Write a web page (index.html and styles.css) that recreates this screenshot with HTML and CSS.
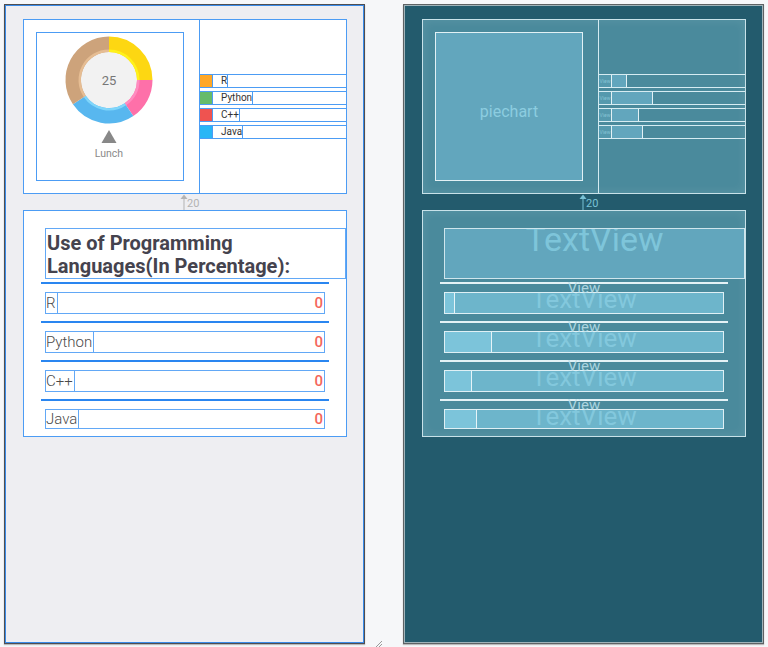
FILE: index.html
```html
<!DOCTYPE html>
<html>
<head>
<meta charset="utf-8">
<link rel="stylesheet" href="styles.css">
</head>
<body>
<div class="canvas">
  <!-- Design view -->
  <div class="frame design">
    <div class="card card-top">
      <div class="pie-col">
        <div class="pie-box">
          <svg class="pie" width="146" height="147" viewBox="0 0 146 147">
            <circle cx="72" cy="47" r="28.5" fill="#f2f2f2"/>
            <g fill="none" stroke-width="15.5">
              <path d="M72 11.25 A35.75 35.75 0 0 1 107.75 47" stroke="#fdd712"/>
              <path d="M107.75 47 A35.75 35.75 0 0 1 91.99 76.64" stroke="#fe70a9"/>
              <path d="M91.99 76.64 A35.75 35.75 0 0 1 42.36 66.99" stroke="#58b7ef"/>
              <path d="M42.36 66.99 A35.75 35.75 0 0 1 72 11.25" stroke="#cda37b"/>
            </g>
            <g fill="none" stroke-width="2.4">
              <path d="M72 17.7 A29.3 29.3 0 0 1 101.3 47" stroke="#fff21a"/>
              <path d="M101.3 47 A29.3 29.3 0 0 1 88.38 71.29" stroke="#ff8cc0"/>
              <path d="M88.38 71.29 A29.3 29.3 0 0 1 47.71 63.38" stroke="#7fd6fb"/>
              <path d="M47.71 63.38 A29.3 29.3 0 0 1 72 17.7" stroke="#e6bd93"/>
            </g>
            <text x="72" y="52" text-anchor="middle" class="pie-num">25</text>
            <polygon points="64.5,110 72,97 79.5,110" fill="#888888"/>
            <text x="72" y="124" text-anchor="middle" class="pie-lbl">Lunch</text>
          </svg>
        </div>
      </div>
      <div class="legend-col">
        <div class="legend-row"><span class="sw sw-r"></span><span class="lg-lbl">R</span></div>
        <div class="legend-row"><span class="sw sw-py"></span><span class="lg-lbl">Python</span></div>
        <div class="legend-row"><span class="sw sw-c"></span><span class="lg-lbl">C++</span></div>
        <div class="legend-row"><span class="sw sw-j"></span><span class="lg-lbl">Java</span></div>
      </div>
    </div>
    <div class="spacer">
      <svg class="arrow" width="8" height="16" viewBox="0 0 8 16"><line x1="4" y1="3" x2="4" y2="16" stroke="currentColor" stroke-width="1"/><polygon points="0.5,5 4,0.5 7.5,5" fill="currentColor"/></svg>
      <span class="dist">20</span>
    </div>
    <div class="card card-bottom">
      <div class="title">Use of Programming<br>Languages(In Percentage):</div>
      <div class="hline first"></div>
      <div class="row"><span class="rlbl">R</span><span class="val">0</span></div>
      <div class="hline"></div>
      <div class="row"><span class="rlbl">Python</span><span class="val">0</span></div>
      <div class="hline"></div>
      <div class="row"><span class="rlbl">C++</span><span class="val">0</span></div>
      <div class="hline"></div>
      <div class="row row-last"><span class="rlbl">Java</span><span class="val">0</span></div>
    </div>
  </div>

  <!-- Blueprint view -->
  <div class="frame blueprint">
    <div class="card card-top">
      <div class="pie-col">
        <div class="pie-box bp-pie">piechart</div>
      </div>
      <div class="legend-col">
        <div class="legend-row"><span class="sw bp-sw">View</span><span class="bp-lg w-r"></span></div>
        <div class="legend-row"><span class="sw bp-sw">View</span><span class="bp-lg w-py"></span></div>
        <div class="legend-row"><span class="sw bp-sw">View</span><span class="bp-lg w-c"></span></div>
        <div class="legend-row"><span class="sw bp-sw">View</span><span class="bp-lg w-j"></span></div>
      </div>
    </div>
    <div class="spacer">
      <svg class="arrow" width="8" height="16" viewBox="0 0 8 16"><line x1="4" y1="3" x2="4" y2="16" stroke="currentColor" stroke-width="1"/><polygon points="0.5,5 4,0.5 7.5,5" fill="currentColor"/></svg>
      <span class="dist">20</span>
    </div>
    <div class="card card-bottom">
      <div class="title bp-title"><span class="bp-tv-big">TextView</span></div>
      <div class="hline first"><span class="view-tag">View</span></div>
      <div class="row bp-row"><span class="bp-rl rw-r"></span><span class="bp-tv">TextView</span></div>
      <div class="hline"><span class="view-tag">View</span></div>
      <div class="row bp-row"><span class="bp-rl rw-py"></span><span class="bp-tv">TextView</span></div>
      <div class="hline"><span class="view-tag">View</span></div>
      <div class="row bp-row"><span class="bp-rl rw-c"></span><span class="bp-tv">TextView</span></div>
      <div class="hline"><span class="view-tag">View</span></div>
      <div class="row bp-row row-last"><span class="bp-rl rw-j"></span><span class="bp-tv">TextView</span></div>
    </div>
  </div>
</div>
<svg class="grip" width="8" height="6" viewBox="0 0 8 6"><line x1="1" y1="6" x2="7" y2="0" stroke="#9a9a9a" stroke-width="1"/><line x1="4" y1="6" x2="7" y2="3" stroke="#9a9a9a" stroke-width="1"/></svg>
</body>
</html>
```

FILE: styles.css
```css
html, body {
  margin: 0;
  padding: 0;
}
body {
  background: #f6f7f9;
  font-family: Roboto, "Liberation Sans", sans-serif;
  width: 768px;
  height: 647px;
  overflow: hidden;
  position: relative;
}
.canvas {
  display: flex;
  gap: 38px;
  padding: 4px 0 0 4px;
}
.frame {
  width: 361px;
  height: 640px;
  box-sizing: border-box;
  padding: 14px 0 0 18px;
  display: flex;
  flex-direction: column;
}
.design {
  background: #eeeef2;
  border: 1px solid #4e4e52;
  box-shadow: inset 0 0 0 1px #3a8be8, 0 1px 1px rgba(0,0,0,0.25);
}
.blueprint {
  background: #235b6d;
  border: 1px solid #5e6264;
  box-shadow: inset 0 0 0 1px #9fb3b9, 0 1px 1px rgba(0,0,0,0.25);
}

/* Cards */
.card {
  width: 324px;
  box-sizing: border-box;
  flex: none;
}
.design .card {
  background: #ffffff;
  border: 1px solid #4c9cf4;
}
.blueprint .card {
  background: #4a8a9c;
  border: 1px solid #c8e2e9;
  box-shadow: inset 0 0 8px 2px rgba(255,255,255,0.07);
}
.card-top {
  height: 175px;
  display: flex;
}
.pie-col {
  width: 176px;
  box-sizing: border-box;
  padding: 12px 0 0 12px;
  border-right: 1px solid #4c9cf4;
}
.blueprint .pie-col {
  border-right-color: #d4ebf1;
}
.pie-box {
  width: 148px;
  height: 149px;
  box-sizing: border-box;
  border: 1px solid #4c9cf4;
}
.pie {
  display: block;
}
.pie-num {
  font-family: Roboto, "Liberation Sans", sans-serif;
  font-size: 13px;
  fill: #777777;
}
.pie-lbl {
  font-family: Roboto, "Liberation Sans", sans-serif;
  font-size: 10.5px;
  fill: #8a8a8a;
}
.bp-pie {
  background: #62a6bd;
  border-color: #e2f1f5;
  display: flex;
  align-items: center;
  justify-content: center;
  padding-top: 9px;
  color: #8ccde0;
  font-size: 16px;
}

/* Legend */
.legend-col {
  flex: 1;
  padding-top: 54px;
  display: flex;
  flex-direction: column;
  gap: 3px;
}
.legend-row {
  height: 14px;
  box-sizing: border-box;
  border-top: 1px solid #4c9cf4;
  border-bottom: 1px solid #4c9cf4;
  display: flex;
}
.sw {
  width: 12px;
  height: 12px;
  flex: none;
}
.sw-r { background: #ffa726; }
.sw-py { background: #66bb6a; }
.sw-c { background: #ef5350; }
.sw-j { background: #29b6f6; }
.lg-lbl {
  border-left: 1px solid #4c9cf4;
  border-right: 1px solid #4c9cf4;
  padding: 0 0 0 8px;
  font-size: 10px;
  line-height: 12px;
  color: #333333;
}
.blueprint .legend-row {
  border-top-color: #d6ecf2;
  border-bottom-color: #d6ecf2;
}
.bp-sw {
  background: #5599ad;
  color: #86c3d4;
  font-size: 5px;
  line-height: 12px;
  text-align: center;
  overflow: hidden;
}
.bp-lg {
  background: #62a6bd;
  border-left: 1px solid #e2f1f5;
  border-right: 1px solid #e2f1f5;
  height: 12px;
}
.w-r { width: 14px; }
.w-py { width: 40px; }
.w-c { width: 26px; }
.w-j { width: 30px; }

/* Spacer with distance arrow */
.spacer {
  height: 16px;
  display: flex;
  align-items: flex-start;
  padding-left: 157px;
  color: #b3b3b3;
  flex: none;
}
.blueprint .spacer {
  color: #79c2d6;
}
.arrow {
  display: block;
}
.dist {
  font-size: 11px;
  line-height: 13px;
  margin-top: 3px;
  margin-left: -1px;
}

/* Bottom card */
.card-bottom {
  height: 227px;
  padding-top: 17px;
}
.title {
  margin-left: 21px;
  height: 51px;
  box-sizing: border-box;
  border: 1px solid #62a8f6;
  padding: 3px 0 0 1px;
  font-size: 20px;
  font-weight: 700;
  line-height: 23px;
  color: #45434e;
}
.hline {
  margin: 7px 0 0 17px;
  width: 288px;
  height: 2px;
  background: #2a86f0;
  position: relative;
}
.hline.first {
  margin-top: 3px;
}
.row {
  margin: 8px 0 0 21px;
  width: 280px;
  height: 22px;
  box-sizing: border-box;
  border: 1px solid #62a8f6;
  display: flex;
  justify-content: space-between;
}
.row-last {
  height: 20px;
}
.rlbl {
  border-right: 1px solid #62a8f6;
  padding-right: 1px;
  font-size: 15px;
  font-weight: 300;
  line-height: 20px;
  color: #4a4a4a;
}
.row-last .rlbl, .row-last .val {
  line-height: 18px;
}
.val {
  color: #f4665a;
  font-size: 15px;
  font-weight: 500;
  line-height: 20px;
  padding-right: 1px;
}

/* Blueprint bottom card */
.bp-title {
  background: #62a6bd;
  border-color: #cfe6ed;
  padding: 0;
  overflow: hidden;
  text-align: center;
}
.bp-tv-big {
  display: block;
  font-size: 34px;
  font-weight: 400;
  line-height: 20px;
  color: #7ec5da;
}
.blueprint .hline {
  background: #e4f2f6;
}
.view-tag {
  position: absolute;
  left: 0;
  right: 0;
  top: -1px;
  text-align: center;
  font-size: 15px;
  line-height: 15px;
  color: rgba(190, 226, 236, 0.85);
}
.bp-row {
  display: grid;
  grid-template-columns: 1fr;
  justify-content: stretch;
  background: #6db5cb;
  border-color: #dff0f5;
  overflow: hidden;
}
.bp-row > * {
  grid-area: 1 / 1;
}
.bp-rl {
  justify-self: start;
  height: 100%;
  background: #7cc4da;
  border-right: 1px solid #e6f4f8;
}
.rw-r { width: 9px; }
.rw-py { width: 46px; }
.rw-c { width: 26px; }
.rw-j { width: 31px; }
.bp-tv {
  justify-self: center;
  align-self: start;
  height: 20px;
  overflow: hidden;
  font-size: 26px;
  line-height: 12px;
  color: #86cbdf;
  opacity: 0.9;
}

.grip {
  position: absolute;
  left: 375px;
  top: 641px;
}
```
